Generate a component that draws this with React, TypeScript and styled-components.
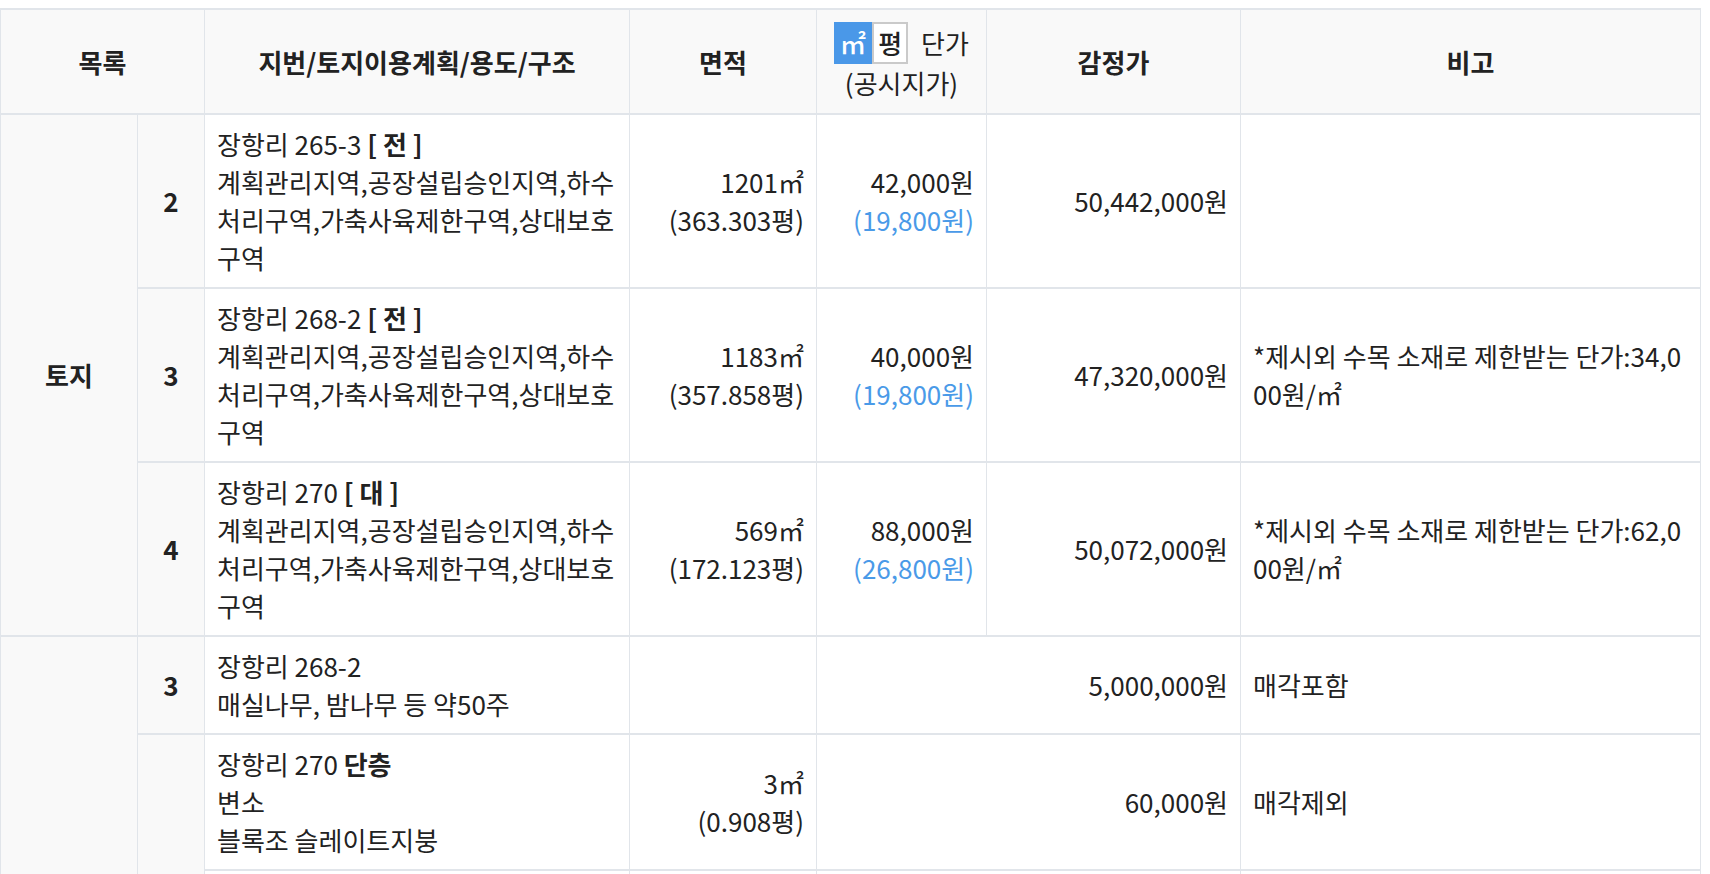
import React from "react";
import styled, { createGlobalStyle } from "styled-components";

const GlobalStyle = createGlobalStyle`
  html, body {
    margin: 0;
    padding: 0;
    background: #fff;
  }
  body {
    font-family: "Noto Sans CJK KR", "Noto Sans", sans-serif;
    color: #222;
  }
`;

type Align = "left" | "center" | "right";

interface LandRow {
  no: number;
  lot: string;
  kind: string;
  plan: string;
  area: string;
  pyeong: string;
  unit: string;
  official: string;
  price: string;
  note: string;
}

interface ExtraRow {
  no?: number;
  noSpan?: number;
  lot: string;
  structure?: string;
  lines: string[];
  area?: string;
  pyeong?: string;
  price: string;
  note: string;
}

const PLAN = "계획관리지역,공장설립승인지역,하수처리구역,가축사육제한구역,상대보호구역";

const landRows: LandRow[] = [
  { no: 2, lot: "장항리 265-3", kind: "전", plan: PLAN, area: "1201", pyeong: "363.303", unit: "42,000", official: "19,800", price: "50,442,000", note: "" },
  { no: 3, lot: "장항리 268-2", kind: "전", plan: PLAN, area: "1183", pyeong: "357.858", unit: "40,000", official: "19,800", price: "47,320,000", note: "*제시외 수목 소재로 제한받는 단가:34,000원/㎡" },
  { no: 4, lot: "장항리 270", kind: "대", plan: PLAN, area: "569", pyeong: "172.123", unit: "88,000", official: "26,800", price: "50,072,000", note: "*제시외 수목 소재로 제한받는 단가:62,000원/㎡" },
];

const extraRows: ExtraRow[] = [
  { no: 3, noSpan: 1, lot: "장항리 268-2", lines: ["매실나무, 밤나무 등 약50주"], price: "5,000,000", note: "매각포함" },
  { no: 4, noSpan: 4, lot: "장항리 270", structure: "단층", lines: ["변소", "블록조 슬레이트지붕"], area: "3", pyeong: "0.908", price: "60,000", note: "매각제외" },
  { lot: "장항리 270", structure: "단층", lines: ["창고", "블록조 슬레이트지붕"], area: "6", pyeong: "1.815", price: "120,000", note: "매각제외" },
  { lot: "장항리 270", structure: "단층", lines: ["보일러실", "블록조 슬레이트지붕"], area: "2", pyeong: "0.605", price: "40,000", note: "매각제외" },
  { lot: "장항리 270", structure: "단층", lines: ["축사", "블록조 슬레이트지붕"], area: "12", pyeong: "3.63", price: "180,000", note: "매각제외" },
];

function App() {
  return (
    <Page>
      <GlobalStyle />
      <Table>
        <colgroup>
          <col style={{ width: 137 }} />
          <col style={{ width: 67 }} />
          <col style={{ width: 425 }} />
          <col style={{ width: 187 }} />
          <col style={{ width: 170 }} />
          <col style={{ width: 254 }} />
          <col style={{ width: 460 }} />
        </colgroup>
        <thead>
          <tr>
            <Th colSpan={2}>목록</Th>
            <Th>지번/토지이용계획/용도/구조</Th>
            <Th>면적</Th>
            <Th>
              <UnitRow>
                <UnitToggle>
                  <UnitButton $active>㎡</UnitButton>
                  <UnitButton>평</UnitButton>
                </UnitToggle>
                <Plain>단가</Plain>
              </UnitRow>
              <Plain>(공시지가)</Plain>
            </Th>
            <Th>감정가</Th>
            <Th>비고</Th>
          </tr>
        </thead>
        <tbody>
          {landRows.map((row, i) => (
            <tr key={"land" + row.no}>
              {i === 0 && (
                <Td rowSpan={landRows.length} $align="center" $shade $bold>
                  토지
                </Td>
              )}
              <Td $align="center" $shade $bold>
                {row.no}
              </Td>
              <Td>
                {row.lot} <b>[ {row.kind} ]</b>
                <br />
                {row.plan}
              </Td>
              <Td $align="right">
                {row.area}㎡
                <br />({row.pyeong}평)
              </Td>
              <Td $align="right">
                {row.unit}원
                <br />
                <Official>({row.official}원)</Official>
              </Td>
              <Td $align="right">{row.price}원</Td>
              <Td>{row.note}</Td>
            </tr>
          ))}
          {extraRows.map((row, i) => (
            <tr key={"extra" + i}>
              {i === 0 && <Td rowSpan={extraRows.length} $align="center" $shade $bold>제시외</Td>}
              {row.noSpan && (
                <Td rowSpan={row.noSpan} $align="center" $shade $bold>
                  {row.no}
                </Td>
              )}
              <Td>
                {row.lot}
                {row.structure && (
                  <>
                    {" "}
                    <b>{row.structure}</b>
                  </>
                )}
                {row.lines.map((line) => (
                  <React.Fragment key={line}>
                    <br />
                    {line}
                  </React.Fragment>
                ))}
              </Td>
              <Td $align="right">
                {row.area && (
                  <>
                    {row.area}㎡
                    <br />({row.pyeong}평)
                  </>
                )}
              </Td>
              <Td colSpan={2} $align="right">
                {row.price}원
              </Td>
              <Td>{row.note}</Td>
            </tr>
          ))}
        </tbody>
      </Table>
    </Page>
  );
}

const Page = styled.div`
  padding: 8px 10px 0 0;
`;

const Table = styled.table`
  width: 1700px;
  border-collapse: collapse;
  table-layout: fixed;
  font-size: 26px;
  line-height: 38px;
`;

const Th = styled.th`
  height: 83px;
  padding: 10px 12px;
  background: #f9f9f9;
  border: 1px solid #e1e5ea;
  border-top-width: 2px;
  border-bottom-width: 2px;
  font-weight: 700;
  text-align: center;
  vertical-align: middle;
  white-space: nowrap;
`;

const UnitRow = styled.div`
  display: flex;
  align-items: center;
  justify-content: center;
  gap: 13px;
`;

const UnitToggle = styled.div`
  display: flex;
`;

const UnitButton = styled.span<{ $active?: boolean }>`
  display: inline-block;
  height: 42px;
  padding: 0 4px;
  box-sizing: border-box;
  line-height: 38px;
  font-weight: 500;
  color: ${(p) => (p.$active ? "#fff" : "#222")};
  background: ${(p) => (p.$active ? "#4a98e8" : "#fff")};
  border: 2px solid ${(p) => (p.$active ? "#4a98e8" : "#cacaca")};
`;

const Plain = styled.span`
  font-weight: 400;
`;

const Td = styled.td<{ $align?: Align; $shade?: boolean; $bold?: boolean }>`
  padding: 10px 12px 10px;
  border: 1px solid #e1e5ea;
  border-top-width: 2px;
  border-bottom-width: 2px;
  background: ${(p) => (p.$shade ? "#f9f9f9" : "#fff")};
  text-align: ${(p) => p.$align || "left"};
  font-weight: ${(p) => (p.$bold ? 700 : 400)};
  vertical-align: middle;
  word-break: break-all;

  b {
    font-weight: 700;
  }
`;

const Official = styled.span`
  color: #4a9ae8;
`;

export default App;
